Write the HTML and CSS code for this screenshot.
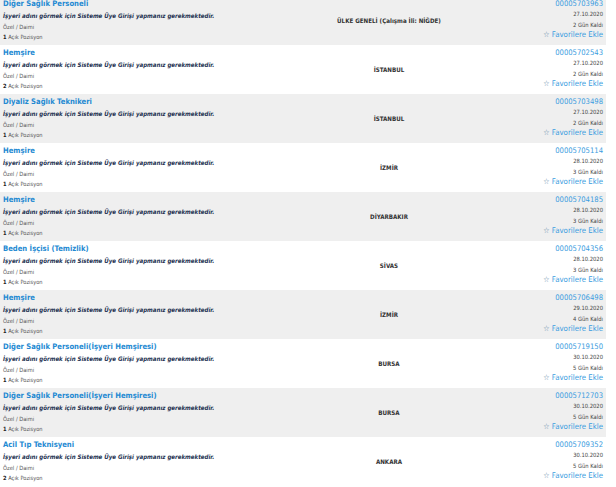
FILE: index.html
```html
<!DOCTYPE html>
<html lang="tr">
<head>
  <meta charset="UTF-8" />
  <meta name="viewport" content="width=device-width, initial-scale=1" />
  <title>İş İlanları</title>
  <link rel="stylesheet" href="styles.css">
</head>
<body>
  <div class="list">
    <div class="row">
      <div class="info">
        <a class="title" href="#">Diğer Sağlık Personeli</a>
        <div class="company">İşyeri adını görmek için Sisteme Üye Girişi yapmanız gerekmektedir.</div>
        <div class="type">Özel / Daimi</div>
        <div class="count"><b>1</b> Açık Pozisyon</div>
      </div>
      <div class="city">ÜLKE GENELİ (Çalışma İli: NİĞDE)</div>
      <div class="meta">
        <a class="no" href="#">00005703963</a>
        <div class="date">27.10.2020</div>
        <div class="days">2 Gün Kaldı</div>
        <a class="fav" href="#"><span class="star">☆</span> Favorilere Ekle</a>
      </div>
    </div>

    <div class="row">
      <div class="info">
        <a class="title" href="#">Hemşire</a>
        <div class="company">İşyeri adını görmek için Sisteme Üye Girişi yapmanız gerekmektedir.</div>
        <div class="type">Özel / Daimi</div>
        <div class="count"><b>2</b> Açık Pozisyon</div>
      </div>
      <div class="city">İSTANBUL</div>
      <div class="meta">
        <a class="no" href="#">00005702543</a>
        <div class="date">27.10.2020</div>
        <div class="days">2 Gün Kaldı</div>
        <a class="fav" href="#"><span class="star">☆</span> Favorilere Ekle</a>
      </div>
    </div>

    <div class="row">
      <div class="info">
        <a class="title" href="#">Diyaliz Sağlık Teknikeri</a>
        <div class="company">İşyeri adını görmek için Sisteme Üye Girişi yapmanız gerekmektedir.</div>
        <div class="type">Özel / Daimi</div>
        <div class="count"><b>1</b> Açık Pozisyon</div>
      </div>
      <div class="city">İSTANBUL</div>
      <div class="meta">
        <a class="no" href="#">00005703498</a>
        <div class="date">27.10.2020</div>
        <div class="days">2 Gün Kaldı</div>
        <a class="fav" href="#"><span class="star">☆</span> Favorilere Ekle</a>
      </div>
    </div>

    <div class="row">
      <div class="info">
        <a class="title" href="#">Hemşire</a>
        <div class="company">İşyeri adını görmek için Sisteme Üye Girişi yapmanız gerekmektedir.</div>
        <div class="type">Özel / Daimi</div>
        <div class="count"><b>1</b> Açık Pozisyon</div>
      </div>
      <div class="city">İZMİR</div>
      <div class="meta">
        <a class="no" href="#">00005705114</a>
        <div class="date">28.10.2020</div>
        <div class="days">3 Gün Kaldı</div>
        <a class="fav" href="#"><span class="star">☆</span> Favorilere Ekle</a>
      </div>
    </div>

    <div class="row">
      <div class="info">
        <a class="title" href="#">Hemşire</a>
        <div class="company">İşyeri adını görmek için Sisteme Üye Girişi yapmanız gerekmektedir.</div>
        <div class="type">Özel / Daimi</div>
        <div class="count"><b>1</b> Açık Pozisyon</div>
      </div>
      <div class="city">DİYARBAKIR</div>
      <div class="meta">
        <a class="no" href="#">00005704185</a>
        <div class="date">28.10.2020</div>
        <div class="days">3 Gün Kaldı</div>
        <a class="fav" href="#"><span class="star">☆</span> Favorilere Ekle</a>
      </div>
    </div>

    <div class="row">
      <div class="info">
        <a class="title" href="#">Beden İşçisi (Temizlik)</a>
        <div class="company">İşyeri adını görmek için Sisteme Üye Girişi yapmanız gerekmektedir.</div>
        <div class="type">Özel / Daimi</div>
        <div class="count"><b>1</b> Açık Pozisyon</div>
      </div>
      <div class="city">SİVAS</div>
      <div class="meta">
        <a class="no" href="#">00005704356</a>
        <div class="date">28.10.2020</div>
        <div class="days">3 Gün Kaldı</div>
        <a class="fav" href="#"><span class="star">☆</span> Favorilere Ekle</a>
      </div>
    </div>

    <div class="row">
      <div class="info">
        <a class="title" href="#">Hemşire</a>
        <div class="company">İşyeri adını görmek için Sisteme Üye Girişi yapmanız gerekmektedir.</div>
        <div class="type">Özel / Daimi</div>
        <div class="count"><b>1</b> Açık Pozisyon</div>
      </div>
      <div class="city">İZMİR</div>
      <div class="meta">
        <a class="no" href="#">00005706498</a>
        <div class="date">29.10.2020</div>
        <div class="days">4 Gün Kaldı</div>
        <a class="fav" href="#"><span class="star">☆</span> Favorilere Ekle</a>
      </div>
    </div>

    <div class="row">
      <div class="info">
        <a class="title" href="#">Diğer Sağlık Personeli(İşyeri Hemşiresi)</a>
        <div class="company">İşyeri adını görmek için Sisteme Üye Girişi yapmanız gerekmektedir.</div>
        <div class="type">Özel / Daimi</div>
        <div class="count"><b>1</b> Açık Pozisyon</div>
      </div>
      <div class="city">BURSA</div>
      <div class="meta">
        <a class="no" href="#">00005719150</a>
        <div class="date">30.10.2020</div>
        <div class="days">5 Gün Kaldı</div>
        <a class="fav" href="#"><span class="star">☆</span> Favorilere Ekle</a>
      </div>
    </div>

    <div class="row">
      <div class="info">
        <a class="title" href="#">Diğer Sağlık Personeli(İşyeri Hemşiresi)</a>
        <div class="company">İşyeri adını görmek için Sisteme Üye Girişi yapmanız gerekmektedir.</div>
        <div class="type">Özel / Daimi</div>
        <div class="count"><b>1</b> Açık Pozisyon</div>
      </div>
      <div class="city">BURSA</div>
      <div class="meta">
        <a class="no" href="#">00005712703</a>
        <div class="date">30.10.2020</div>
        <div class="days">5 Gün Kaldı</div>
        <a class="fav" href="#"><span class="star">☆</span> Favorilere Ekle</a>
      </div>
    </div>

    <div class="row">
      <div class="info">
        <a class="title" href="#">Acil Tıp Teknisyeni</a>
        <div class="company">İşyeri adını görmek için Sisteme Üye Girişi yapmanız gerekmektedir.</div>
        <div class="type">Özel / Daimi</div>
        <div class="count"><b>2</b> Açık Pozisyon</div>
      </div>
      <div class="city">ANKARA</div>
      <div class="meta">
        <a class="no" href="#">00005709352</a>
        <div class="date">30.10.2020</div>
        <div class="days">5 Gün Kaldı</div>
        <a class="fav" href="#"><span class="star">☆</span> Favorilere Ekle</a>
      </div>
    </div>
  </div>
</body>
</html>
```

FILE: styles.css
```css
body {
  font-family: "DejaVu Sans Condensed", "DejaVu Sans", sans-serif;
  font-stretch: condensed;
  background: #fff;
  margin: 0;
  padding: 0;
  overflow: hidden;
}
a {
  text-decoration: none;
}
.list {
  width: 606px;
  margin-top: -4px;
}
.row {
  display: grid;
  grid-template-columns: 300px 178px 1fr;
  height: 49px;
  box-sizing: border-box;
  background: #fff;
}
.row:nth-child(odd) {
  background: #efefef;
}
.info {
  padding: 2px 0 0 3px;
}
.title {
  display: block;
  font-size: 7.6px;
  line-height: 12px;
  font-weight: bold;
  color: #2389d2;
}
.company {
  font-size: 6.1px;
  line-height: 12px;
  font-weight: bold;
  font-style: italic;
  color: #223050;
}
.type, .count {
  font-size: 5.7px;
  line-height: 10px;
  color: #555;
}
.count b {
  color: #222;
}
.city {
  align-self: center;
  text-align: center;
  font-size: 6.2px;
  font-weight: bold;
  color: #333;
}
.meta {
  padding: 2px 3px 0 0;
  text-align: right;
}
.no {
  display: block;
  font-size: 7.6px;
  line-height: 11px;
  color: #3a9ce0;
}
.date, .days {
  font-size: 5.8px;
  line-height: 10.5px;
  color: #444;
}
.fav {
  display: block;
  font-size: 7.8px;
  line-height: 10px;
  color: #3a9ce0;
}
.star {
  color: #5a86a8;
}
```
